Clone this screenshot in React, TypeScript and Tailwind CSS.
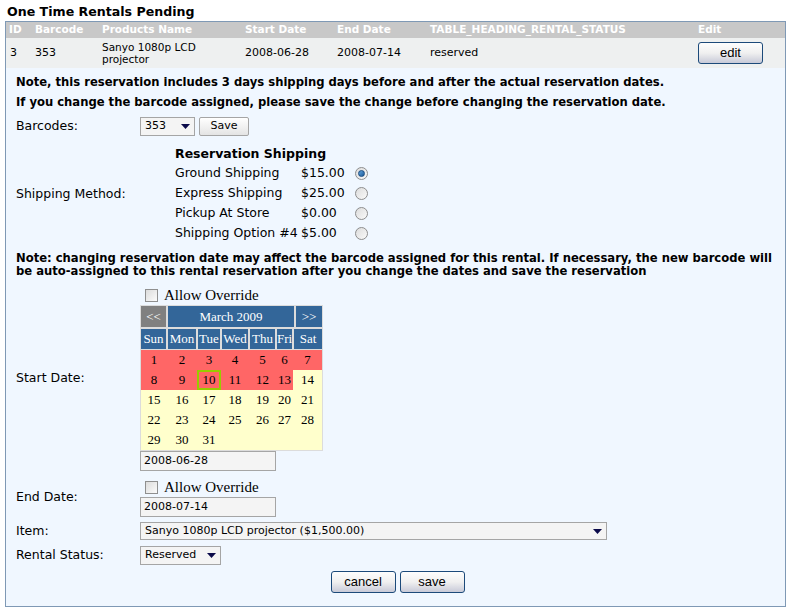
import React from 'react';

const shipping = [
  { name: 'Ground Shipping', price: '$15.00', checked: true },
  { name: 'Express Shipping', price: '$25.00', checked: false },
  { name: 'Pickup At Store', price: '$0.00', checked: false },
  { name: 'Shipping Option #4', price: '$5.00', checked: false },
];

const dayNames = ['Sun', 'Mon', 'Tue', 'Wed', 'Thu', 'Fri', 'Sat'];
const headWidths = ['w-[25px]', 'w-[28px]', 'w-[22px]', 'w-[26px]', 'w-[25px]', 'w-[15px]', 'flex-1'];
const dayWidths = ['w-[26px]', 'w-[30px]', 'w-[24px]', 'w-[28px]', 'w-[27px]', 'w-[17px]', 'flex-1'];

function Radio({ checked }: { checked: boolean }) {
  return (
    <span className="inline-flex w-[13px] h-[13px] rounded-full border border-[#8d8d8d] bg-gradient-to-br from-[#dcdcdc] to-[#fafafa] items-center justify-center">
      {checked && <span className="w-[7px] h-[7px] rounded-full bg-gradient-to-br from-[#5fa3dd] to-[#1d5c9a] border border-[#1a4c80]" />}
    </span>
  );
}

function Checkbox() {
  return <span className="inline-block w-[13px] h-[13px] border border-[#8f8f8f] bg-gradient-to-br from-[#dcdcdc] to-[#fbfbfb]" />;
}

function Arrow() {
  return (
    <svg width="9" height="5" viewBox="0 0 9 5">
      <path d="M0 0h9L4.5 5z" fill="#0a0a4a" />
    </svg>
  );
}

function Btn({ label, className }: { label: string; className: string }) {
  return (
    <button
      className={`h-[22px] rounded-[3px] border border-[#1c4a7a] bg-gradient-to-b from-[#fdfdfd] via-[#f0f0f0] to-[#c8cad8] text-[13px] text-black font-['Liberation_Sans',sans-serif] ${className}`}
    >
      {label}
    </button>
  );
}

function Calendar() {
  const cells: (number | null)[] = [];
  for (let i = 1; i <= 31; i++) cells.push(i);
  while (cells.length < 35) cells.push(null);
  const rows = [0, 1, 2, 3, 4].map((r) => cells.slice(r * 7, r * 7 + 7));
  return (
    <div className="w-[183px] bg-[#dcdcdc] font-['Liberation_Serif',serif] text-[13px]">
      <div className="flex gap-[2px] p-[1px] pb-0">
        <div className="w-[25px] h-[21px] bg-[#808080] text-white flex items-center justify-center">&lt;&lt;</div>
        <div className="flex-1 h-[21px] bg-[#336699] text-white flex items-center justify-center">March 2009</div>
        <div className="w-[26px] h-[21px] bg-[#336699] text-white flex items-center justify-center">&gt;&gt;</div>
      </div>
      <div className="flex gap-[2px] px-[1px] pt-[2px] pb-[1px]">
        {dayNames.map((d, i) => (
          <div key={d} className={`${headWidths[i]} h-[20px] bg-[#336699] text-white flex items-center justify-center`}>
            {d}
          </div>
        ))}
      </div>
      <div className="px-[1px] pb-[1px]">
        {rows.map((row, r) => (
          <div key={r} className="flex">
            {row.map((c, i) => {
              const red = c !== null && c <= 13;
              return (
                <div
                  key={i}
                  className={`${dayWidths[i]} h-[20px] flex items-center justify-center text-black ${red ? 'bg-[#ff6666]' : 'bg-[#ffffcc]'}`}
                >
                  {c === 10 ? (
                    <span className="w-[24px] h-[20px] border-2 border-[#99cc00] flex items-center justify-center">10</span>
                  ) : (
                    c
                  )}
                </div>
              );
            })}
          </div>
        ))}
      </div>
    </div>
  );
}

export default function App() {
  return (
    <div className="w-[791px] h-[613px] bg-white px-[5px] pt-[4px] font-['DejaVu_Sans',Verdana,sans-serif] text-black">
      <div className="font-bold text-[12.6px] leading-[15px] pl-[2px]">One Time Rentals Pending</div>
      <div className="mt-[2px] border border-[#7f99b5] bg-[#f0f7ff] h-[586px]">
        <div className="flex h-[16px] bg-[#c8c8c8] text-white font-bold text-[10.5px] items-center">
          <div className="w-[29px] pl-[3px]">ID</div>
          <div className="w-[67px]">Barcode</div>
          <div className="w-[143px]">Products Name</div>
          <div className="w-[92px]">Start Date</div>
          <div className="w-[93px]">End Date</div>
          <div className="w-[268px]">TABLE_HEADING_RENTAL_STATUS</div>
          <div>Edit</div>
        </div>
        <div className="flex h-[30px] bg-[#eef0f0] text-[11px] items-center">
          <div className="w-[29px] pl-[4px]">3</div>
          <div className="w-[67px]">353</div>
          <div className="w-[143px] leading-[12px] text-[10.5px]">
            Sanyo 1080p LCD
            <br />
            projector
          </div>
          <div className="w-[92px]">2008-06-28</div>
          <div className="w-[93px]">2008-07-14</div>
          <div className="w-[268px]">reserved</div>
          <Btn label="edit" className="w-[65px]" />
        </div>
        <div className="pl-[10px] pt-[4px] text-[12.5px]">
          <p className="font-bold text-[11.6px] leading-[20px]">Note, this reservation includes 3 days shipping days before and after the actual reservation dates.</p>
          <p className="font-bold text-[11.6px] leading-[20px]">If you change the barcode assigned, please save the change before changing the reservation date.</p>
          <div className="flex items-center mt-[4px] h-[20px]">
            <div className="w-[124px]">Barcodes:</div>
            <div className="w-[55px] h-[19px] border border-[#a5a5a5] bg-[#f4f4f4] flex items-center justify-between px-[4px] text-[11px]">
              353 <Arrow />
            </div>
            <button className="ml-[4px] w-[50px] h-[19px] border border-[#a5a5a5] rounded-[2px] bg-gradient-to-b from-white to-[#e4e4e4] text-[11px]">Save</button>
          </div>
          <div className="flex items-center mt-[9px]">
            <div className="w-[159px]">Shipping Method:</div>
            <div>
              <div className="font-bold leading-[18px]">Reservation Shipping</div>
              {shipping.map((s) => (
                <div key={s.name} className="flex items-center h-[20px]">
                  <div className="w-[126px]">{s.name}</div>
                  <div className="w-[54px]">{s.price}</div>
                  <Radio checked={s.checked} />
                </div>
              ))}
            </div>
          </div>
          <p className="font-bold text-[11.6px] leading-[13px] mt-[9px] pr-[8px]">
            Note: changing reservation date may affect the barcode assigned for this rental. If necessary, the new barcode will be auto-assigned to this rental reservation after you change the dates and save the reservation
          </p>
          <div className="flex items-center mt-[7px]">
            <div className="w-[124px]">Start Date:</div>
            <div>
              <div className="flex items-center gap-[6px] h-[20px] pl-[5px] font-['Liberation_Serif',serif] text-[15px]">
                <Checkbox /> Allow Override
              </div>
              <Calendar />
              <div className="w-[136px] h-[20px] border border-[#a5a5a5] bg-[#f4f4f4] text-[11px] flex items-center pl-[3px]">2008-06-28</div>
            </div>
          </div>
          <div className="flex items-center mt-[6px]">
            <div className="w-[124px]">End Date:</div>
            <div>
              <div className="flex items-center gap-[6px] h-[20px] pl-[5px] font-['Liberation_Serif',serif] text-[15px]">
                <Checkbox /> Allow Override
              </div>
              <div className="w-[136px] h-[20px] border border-[#a5a5a5] bg-[#f4f4f4] text-[11px] flex items-center pl-[3px]">2008-07-14</div>
            </div>
          </div>
          <div className="flex items-center mt-[5px]">
            <div className="w-[124px]">Item:</div>
            <div className="w-[467px] h-[18px] border border-[#a5a5a5] bg-[#f4f4f4] text-[11px] flex items-center justify-between pl-[4px] pr-[4px]">
              Sanyo 1080p LCD projector ($1,500.00) <Arrow />
            </div>
          </div>
          <div className="flex items-center mt-[5px]">
            <div className="w-[124px]">Rental Status:</div>
            <div className="w-[81px] h-[19px] border border-[#a5a5a5] bg-[#f4f4f4] text-[11px] flex items-center justify-between pl-[4px] pr-[4px]">
              Reserved <Arrow />
            </div>
          </div>
          <div className="flex justify-center gap-[4px] mt-[6px] pr-[6px]">
            <Btn label="cancel" className="w-[65px]" />
            <Btn label="save" className="w-[65px]" />
          </div>
        </div>
      </div>
    </div>
  );
}
